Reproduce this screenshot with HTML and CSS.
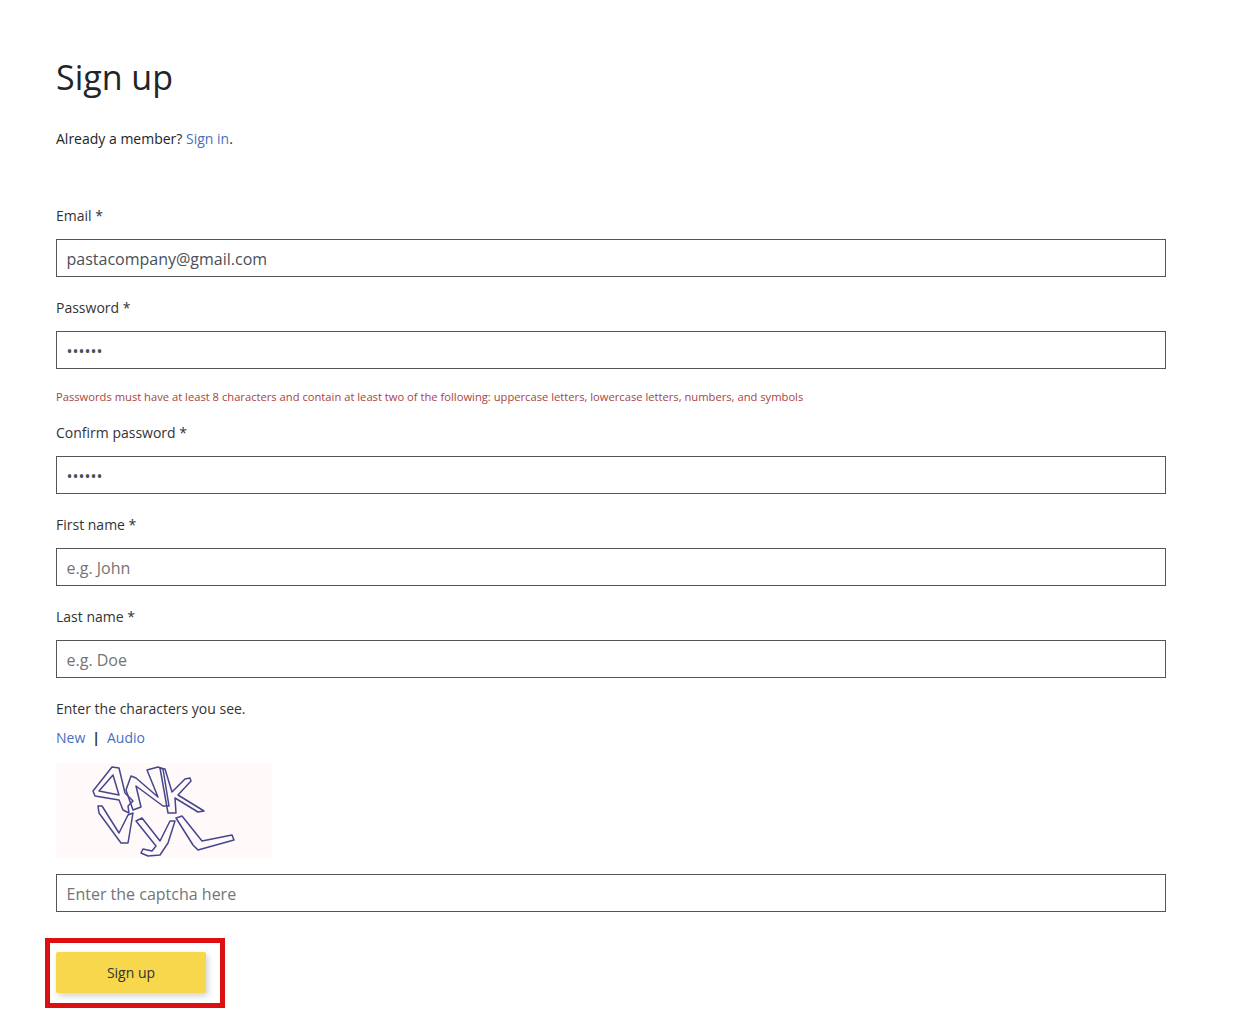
FILE: index.html
```html
<!DOCTYPE html>
<html lang="en">
<head>
<meta charset="utf-8">
<title>Sign up</title>
<link rel="stylesheet" href="styles.css">
</head>
<body>
<main class="page">
  <h1 class="title">Sign up</h1>
  <p class="intro">Already a member? <a class="link" href="#">Sign in</a>.</p>
  <form class="form">
    <label class="label">Email *</label>
    <input class="input" type="text" value="pastacompany@gmail.com">
    <label class="label">Password *</label>
    <input class="input" type="password" value="secret">
    <p class="hint">Passwords must have at least 8 characters and contain at least two of the following: uppercase letters, lowercase letters, numbers, and symbols</p>
    <label class="label">Confirm password *</label>
    <input class="input" type="password" value="secret">
    <label class="label">First name *</label>
    <input class="input" type="text" placeholder="e.g. John">
    <label class="label">Last name *</label>
    <input class="input" type="text" placeholder="e.g. Doe">
    <p class="captcha-prompt">Enter the characters you see.</p>
    <p class="captcha-links"><a class="link" href="#">New</a><span class="sep">|</span><a class="link" href="#">Audio</a></p>
    <svg class="captcha" viewBox="56 763 216 95" width="216" height="95" role="img" aria-label="captcha">
      <g class="captcha-glyphs">
        <path d="M112 767 L119 768 L125 793 L133 801 L128 806 L129 813 L123 810 L119 800 L95 796 L93 791 Z M113 775 L99 791 L119 795 Z"/>
        <path d="M126 790 L131 776 L136 778 L158 797 L147 770 L158 767 L163 769 L169 806 L163 806 L136 786 L141 807 L133 810 Z"/>
        <path d="M160 768 L165 769 L172 792 L185 779 L190 778 L191 781 L178 795 L204 811 L198 812 L175 798 L176 813 L168 813 Z"/>
        <path d="M98 806 L102 806 L119 833 L128 815 L133 813 L128 843 L121 843 L99 813 Z"/>
        <path d="M136 821 L142 818 L160 841 L170 821 L175 821 L168 843 L160 855 L148 856 L141 853 L143 849 L152 851 L156 846 Z"/>
        <path d="M176 818 L182 816 L202 841 L232 835 L234 840 L198 850 L193 845 Z"/>
      </g>
    </svg>
    <input class="input input-captcha" type="text" placeholder="Enter the captcha here">
    <div class="submit-wrap">
      <button class="submit" type="button">Sign up</button>
      <span class="highlight"></span>
    </div>
  </form>
</main>
</body>
</html>
```
FILE: styles.css
```css
* { box-sizing: border-box; }
html, body { margin: 0; padding: 0; background: #fff; }
body {
  font-family: "Open Sans", "Noto Sans", sans-serif;
  font-size: 14px;
  line-height: 20px;
  color: #212529;
}
.page { width: 1241px; height: 1018px; padding: 53px 75px 0 56px; overflow: hidden; }
.title { margin: 0; font-size: 34px; line-height: 48px; font-weight: 400; color: #212529; }
.intro { margin: 28px 0 57px; }
.link { color: #4a6fbd; text-decoration: none; }
.form { display: flex; flex-direction: column; align-items: flex-start; }
.label { display: block; margin-bottom: 13px; color: #333; }
.input {
  display: block;
  width: 1110px;
  height: 38px;
  margin: 0 0 21px;
  padding: 2px 10px 0 9.5px;
  border: 1px solid #555;
  border-radius: 0;
  background: #fff;
  font-family: inherit;
  font-size: 16px;
  color: #495057;
  outline: none;
}
.input::placeholder { color: #757575; opacity: 1; }
.hint { margin: 0 0 19px; font-size: 11.2px; line-height: 14px; color: #a94442; }
.captcha-prompt { margin: 0 0 9px; color: #333; }
.captcha-links { margin: 0 0 15px; }
.sep { margin: 0 7px; color: #333; font-weight: 700; }
.captcha { display: block; margin-bottom: 16px; background: #fff9f9; }
.captcha-glyphs { filter: blur(0.3px); }
.captcha-glyphs path { fill: none; stroke: #46468c; stroke-width: 1.5; stroke-linejoin: round; }
.input-captcha { margin-bottom: 40px; }
.submit-wrap { position: relative; }
.submit {
  display: block;
  width: 150px;
  height: 41px;
  border: 0;
  border-radius: 2px;
  background: #f7d74b;
  box-shadow: 2px 3px 6px rgba(0, 0, 0, 0.18);
  font-family: inherit;
  font-size: 14px;
  color: #333;
}
.highlight {
  position: absolute;
  left: -11px;
  top: -14px;
  width: 180px;
  height: 70px;
  border: 5px solid #dc1010;
  pointer-events: none;
}
```
